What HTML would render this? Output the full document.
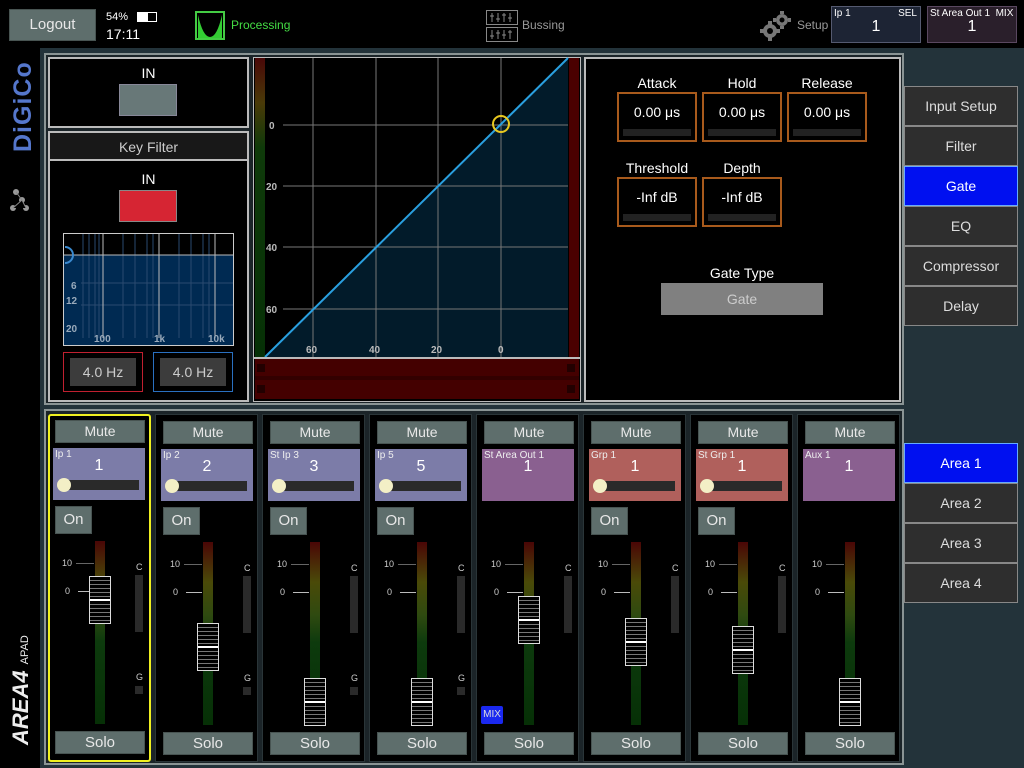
<!DOCTYPE html>
<html><head><meta charset="utf-8"><style>
*{box-sizing:border-box;margin:0;padding:0}
body{width:1024px;height:768px;overflow:hidden;background:#23333a;font-family:"Liberation Sans",sans-serif;color:#ddd;position:relative}
.a{position:absolute}
.btn{position:absolute;background:#5e6e6c;color:#e8e8e8;text-align:center;font-size:14px;border:1px solid #485452}
.strip{position:absolute;top:414px;width:103px;height:348px;background:#000;border:1px solid #2a3538}
.card{position:absolute;top:34px;left:5px;width:92px;height:52px}
.card .n{position:absolute;left:2px;top:1px;font-size:10px;color:#eee}
.card .v{position:absolute;left:0;right:0;top:9px;text-align:center;font-size:16px;color:#fff}
.trk{position:absolute;left:8px;top:32px;width:78px;height:10px;background:#2a2a2a}
.knob{position:absolute;left:4px;top:30px;width:14px;height:14px;border-radius:50%;background:#f3efc6}
.meter{position:absolute;left:47px;top:127px;width:10px;height:183px;background:linear-gradient(#4a0606,#4a4a08 22%,#2f4a10 40%,#0d3a0d 55%,#063006)}
.lbl{position:absolute;font-size:9px;color:#ccc}
.cap{position:absolute;left:41px;width:22px;height:48px;border:1px solid #ddd;background:repeating-linear-gradient(#000 0 3px,#777 3px 4px)}
.cap:after{content:"";position:absolute;left:0;right:0;top:22px;height:2px;background:#fff}
.tab{position:absolute;left:904px;width:114px;height:40px;background:#2e2e2e;border:1px solid #888;color:#ddd;font-size:14px;text-align:center;line-height:38px}
.box{position:absolute;width:80px;height:50px;border:2px solid #a85a1c;background:#000;text-align:center;font-size:14px;color:#fff;padding-top:10px}
.box:after{content:"";position:absolute;left:4px;right:4px;bottom:4px;height:7px;background:#222}
.t{position:absolute;font-size:14px;color:#fff;text-align:center}
</style></head><body>
<!-- top bar -->
<div class="a" style="left:0;top:0;width:1024px;height:48px;background:#000"></div>
<div class="btn" style="left:9px;top:9px;width:87px;height:32px;line-height:30px;font-size:15px">Logout</div>
<div class="a" style="left:106px;top:11px;font-size:11px;color:#fff">54%</div>
<div class="a" style="left:137px;top:12px;width:20px;height:10px;border:1px solid #fff"><div style="width:10px;height:8px;background:#fff"></div></div>
<div class="a" style="left:106px;top:26px;font-size:14px;color:#fff">17:11</div>
<div class="a" style="left:195px;top:11px;width:30px;height:29px;border:2px solid #4c4"><svg width="26" height="25"><path d="M1 2 Q6 24 13 24 Q20 24 25 2 L25 25 L1 25Z" fill="#3c3"/></svg></div>
<div class="a" style="left:231px;top:18px;font-size:12px;color:#4d4">Processing</div>
<svg class="a" style="left:486px;top:10px" width="32" height="32"><rect x="0.5" y="0.5" width="31" height="14" fill="none" stroke="#888"/><rect x="0.5" y="17.5" width="31" height="14" fill="none" stroke="#888"/><path d="M6 3v9M12 3v9M18 3v9M24 3v9M6 20v9M12 20v9M18 20v9M24 20v9M4 6h4M10 9h4M16 5h4M22 8h4M4 26h4M10 23h4M16 25h4M22 22h4" stroke="#888"/></svg>
<div class="a" style="left:522px;top:18px;font-size:12px;color:#999">Bussing</div>
<svg class="a" style="left:758px;top:10px" width="34" height="32"><g fill="#777"><circle cx="12" cy="21" r="7"/><circle cx="24" cy="10" r="6"/><path d="M10 11h4v4h-4zM10 27h4v4h-4zM2 19h4v4H2zM18 19h4v4h-4zM22 1h4v3h-4zM22 16h4v3h-4zM15 8h3v4h-3zM30 8h3v4h-3z"/></g><circle cx="12" cy="21" r="3" fill="#000"/><circle cx="24" cy="10" r="2.5" fill="#000"/></svg>
<div class="a" style="left:797px;top:18px;font-size:12px;color:#999">Setup</div>
<div class="a" style="left:831px;top:6px;width:90px;height:37px;background:#1d2434;border:1px solid #555a70"><span class="a" style="left:2px;top:1px;font-size:10px;color:#fff">Ip 1</span><span class="a" style="right:3px;top:1px;font-size:10px;color:#fff">SEL</span><span class="a" style="left:0;right:0;top:11px;text-align:center;font-size:16px;color:#fff">1</span></div>
<div class="a" style="left:927px;top:6px;width:90px;height:37px;background:#2a1f2b;border:1px solid #5a4860"><span class="a" style="left:2px;top:1px;font-size:10px;color:#fff;white-space:nowrap">St Area Out 1&nbsp; MIX</span><span class="a" style="left:0;right:0;top:11px;text-align:center;font-size:16px;color:#fff">1</span></div>
<!-- left logo -->
<div class="a" style="left:0;top:48px;width:40px;height:720px;background:#000"></div>
<div class="a" style="left:9px;top:152px;transform-origin:0 0;transform:rotate(-90deg);font-size:25px;line-height:28px;font-weight:bold;color:#5577cc;white-space:nowrap;letter-spacing:1px">DiGiCo</div>
<svg class="a" style="left:8px;top:160px" width="24" height="54"><g fill="#999"><circle cx="5" cy="48" r="3"/><circle cx="14" cy="40" r="3"/><circle cx="18" cy="48" r="3"/><circle cx="8" cy="32" r="3"/></g><path d="M5 48L14 40L18 48M14 40L8 32" stroke="#888"/></svg>
<div class="a" style="left:8px;top:745px;transform-origin:0 0;transform:rotate(-90deg);font-size:22px;line-height:26px;font-weight:bold;font-style:italic;color:#eee;white-space:nowrap">AREA4 <span style="font-size:11px;font-style:normal;font-weight:normal">APAD</span></div>
<!-- upper frame -->
<div class="a" style="left:44px;top:53px;width:860px;height:352px;border:2px solid #8a9494;background:#1b2428"></div>
<div class="a" style="left:48px;top:57px;width:201px;height:71px;border:2px solid #bbb;background:#000"></div>
<div class="t" style="left:48px;top:65px;width:201px">IN</div>
<div class="a" style="left:119px;top:84px;width:58px;height:32px;background:#687878;border:1px solid #889"></div>
<div class="a" style="left:48px;top:131px;width:201px;height:271px;border:2px solid #bbb;background:#000"></div>
<div class="a" style="left:50px;top:133px;width:197px;height:28px;background:#181818;border-bottom:2px solid #bbb;text-align:center;line-height:28px;font-size:14px;color:#ccc">Key Filter</div>
<div class="t" style="left:48px;top:171px;width:201px">IN</div>
<div class="a" style="left:119px;top:190px;width:58px;height:32px;background:#d62533;border:1px solid #888"></div>
<svg class="a" style="left:63px;top:233px" width="171" height="113">
<rect x="0.5" y="0.5" width="170" height="112" fill="#000" stroke="#ccc"/>
<rect x="1" y="22" width="169" height="90" fill="#002a52"/>
<g stroke="#2a4a70" stroke-width="1"><path d="M20 1V105M26 1V105M32 1V105M36 1V105M60 1V105M72 1V105M84 1V105M90 1V105M116 1V105M128 1V105M140 1V105M146 1V105M18 50H170M18 72H170"/></g>
<g stroke="#bbb"><path d="M40 1V105M96 1V105M152 1V105M1 22H170"/></g>
<path d="M2 14A8 8 0 0 1 2 30" stroke="#3a8ad0" stroke-width="2" fill="none"/>
<g fill="#9ab" font-size="10" font-weight="bold" font-family="Liberation Sans"><text x="8" y="56">6</text><text x="3" y="71">12</text><text x="3" y="99">20</text><text x="31" y="109">100</text><text x="91" y="109">1k</text><text x="145" y="109">10k</text></g>
</svg>
<div class="a" style="left:63px;top:352px;width:80px;height:40px;border:1px solid #c02030"><div class="a" style="left:6px;top:5px;width:66px;height:28px;background:#3c3c3c;text-align:center;line-height:28px;font-size:14px;color:#ccc">4.0 Hz</div></div>
<div class="a" style="left:153px;top:352px;width:80px;height:40px;border:1px solid #2a70c0"><div class="a" style="left:6px;top:5px;width:66px;height:28px;background:#3c3c3c;text-align:center;line-height:28px;font-size:14px;color:#ccc">4.0 Hz</div></div>
<!-- graph -->
<svg class="a" style="left:253px;top:57px" width="328" height="345">
<rect x="0" y="0" width="328" height="345" fill="#000" stroke="#bbb" stroke-width="2"/>
<defs><linearGradient id="lm" x1="0" y1="0" x2="0" y2="1"><stop offset="0" stop-color="#4a0808"/><stop offset=".15" stop-color="#4a3a08"/><stop offset=".3" stop-color="#0f3a0a"/><stop offset="1" stop-color="#063006"/></linearGradient></defs>
<rect x="2" y="1" width="10" height="299" fill="url(#lm)"/>
<rect x="316" y="1" width="10" height="299" fill="#4a0000"/>
<path d="M12 300L315 1V300Z" fill="#021b2a"/>
<g stroke="#777"><path d="M60 1V300M123 1V300M185 1V300M248 1V300M30 68H315M30 129H315M30 190H315M30 252H315"/></g>
<path d="M12 300L315 1" stroke="#2aa0e0" stroke-width="2"/>
<circle cx="248" cy="67" r="8" fill="none" stroke="#e8c820" stroke-width="2"/>
<g fill="#bbb" font-size="10" font-weight="bold" font-family="Liberation Sans"><text x="16" y="72">0</text><text x="13" y="133">20</text><text x="13" y="194">40</text><text x="13" y="256">60</text><text x="53" y="296">60</text><text x="116" y="296">40</text><text x="178" y="296">20</text><text x="245" y="296">0</text></g>
<rect x="1" y="300" width="326" height="2" fill="#bbb"/>
<rect x="2" y="302" width="324" height="40" fill="#440000"/>
<path d="M2 320H326M2 322H326" stroke="#200"/>
<g fill="#200"><rect x="4" y="307" width="8" height="8"/><rect x="4" y="328" width="8" height="8"/><rect x="314" y="307" width="8" height="8"/><rect x="314" y="328" width="8" height="8"/></g>
</svg>
<!-- right panel -->
<div class="a" style="left:584px;top:57px;width:317px;height:345px;border:2px solid #bbb;background:#000"></div>
<div class="t" style="left:617px;top:75px;width:80px">Attack</div>
<div class="t" style="left:702px;top:75px;width:80px">Hold</div>
<div class="t" style="left:787px;top:75px;width:80px">Release</div>
<div class="box" style="left:617px;top:92px">0.00 μs</div>
<div class="box" style="left:702px;top:92px">0.00 μs</div>
<div class="box" style="left:787px;top:92px">0.00 μs</div>
<div class="t" style="left:612px;top:160px;width:90px">Threshold</div>
<div class="t" style="left:702px;top:160px;width:80px">Depth</div>
<div class="box" style="left:617px;top:177px">-Inf dB</div>
<div class="box" style="left:702px;top:177px">-Inf dB</div>
<div class="t" style="left:661px;top:265px;width:162px">Gate Type</div>
<div class="a" style="left:661px;top:283px;width:162px;height:32px;background:#808080;text-align:center;line-height:32px;font-size:14px;color:#ccc">Gate</div>
<div class="tab" style="top:86px">Input Setup</div>
<div class="tab" style="top:126px">Filter</div>
<div class="tab" style="top:166px;background:#0010f0;color:#fff;border-color:#6af">Gate</div>
<div class="tab" style="top:206px">EQ</div>
<div class="tab" style="top:246px">Compressor</div>
<div class="tab" style="top:286px">Delay</div>
<!-- bottom frame -->
<div class="a" style="left:44px;top:409px;width:860px;height:356px;border:2px solid #8a9494;background:#1b2428"></div>
<div class="tab" style="top:443px;background:#0010f0;color:#fff;border-color:#6af">Area 1</div>
<div class="tab" style="top:483px">Area 2</div>
<div class="tab" style="top:523px">Area 3</div>
<div class="tab" style="top:563px">Area 4</div>

<!-- strip 1 -->
<div class="strip" style="left:48px;border:2px solid #f0f020;border-radius:3px">
<div class="btn" style="left:5px;top:4px;width:90px;height:23px;line-height:21px">Mute</div>
<div class="card" style="left:3px;top:32px;background:#7c7ca8"><span class="n">Ip 1</span><span class="v">1</span><div class="trk"></div><div class="knob"></div></div>
<div class="btn" style="left:5px;top:90px;width:37px;height:28px;line-height:26px;font-size:15px">On</div>
<div class="meter" style="left:45px;top:125px"></div>
<div class="lbl" style="left:12px;top:142px">10</div><div class="a" style="left:26px;top:147px;width:18px;height:1px;background:#666"></div>
<div class="lbl" style="left:15px;top:170px">0</div><div class="a" style="left:28px;top:175px;width:16px;height:1px;background:#bbb"></div>
<div class="lbl" style="left:86px;top:146px">C</div><div class="a" style="left:85px;top:159px;width:8px;height:57px;background:#2a2a2a"></div>
<div class="lbl" style="left:86px;top:256px">G</div><div class="a" style="left:85px;top:270px;width:8px;height:8px;background:#2a2a2a"></div>
<div class="cap" style="left:39px;top:160px"></div>
<div class="btn" style="left:5px;top:315px;width:90px;height:23px;line-height:21px;font-size:15px">Solo</div>
</div>
<!-- strip 2 -->
<div class="strip" style="left:155px">
<div class="btn" style="left:7px;top:6px;width:90px;height:23px;line-height:21px">Mute</div>
<div class="card" style="background:#7c7ca8"><span class="n">Ip 2</span><span class="v">2</span><div class="trk"></div><div class="knob"></div></div>
<div class="btn" style="left:7px;top:92px;width:37px;height:28px;line-height:26px;font-size:15px">On</div>
<div class="meter"></div>
<div class="lbl" style="left:14px;top:144px">10</div><div class="a" style="left:28px;top:149px;width:18px;height:1px;background:#666"></div>
<div class="lbl" style="left:17px;top:172px">0</div><div class="a" style="left:30px;top:177px;width:16px;height:1px;background:#bbb"></div>
<div class="lbl" style="left:88px;top:148px">C</div><div class="a" style="left:87px;top:161px;width:8px;height:57px;background:#2a2a2a"></div>
<div class="lbl" style="left:88px;top:258px">G</div><div class="a" style="left:87px;top:272px;width:8px;height:8px;background:#2a2a2a"></div>
<div class="cap" style="top:208px"></div>
<div class="btn" style="left:7px;top:317px;width:90px;height:23px;line-height:21px;font-size:15px">Solo</div>
</div>
<!-- strip 3 -->
<div class="strip" style="left:262px">
<div class="btn" style="left:7px;top:6px;width:90px;height:23px;line-height:21px">Mute</div>
<div class="card" style="background:#7c7ca8"><span class="n">St Ip 3</span><span class="v">3</span><div class="trk"></div><div class="knob"></div></div>
<div class="btn" style="left:7px;top:92px;width:37px;height:28px;line-height:26px;font-size:15px">On</div>
<div class="meter"></div>
<div class="lbl" style="left:14px;top:144px">10</div><div class="a" style="left:28px;top:149px;width:18px;height:1px;background:#666"></div>
<div class="lbl" style="left:17px;top:172px">0</div><div class="a" style="left:30px;top:177px;width:16px;height:1px;background:#bbb"></div>
<div class="lbl" style="left:88px;top:148px">C</div><div class="a" style="left:87px;top:161px;width:8px;height:57px;background:#2a2a2a"></div>
<div class="lbl" style="left:88px;top:258px">G</div><div class="a" style="left:87px;top:272px;width:8px;height:8px;background:#2a2a2a"></div>
<div class="cap" style="top:263px"></div>
<div class="btn" style="left:7px;top:317px;width:90px;height:23px;line-height:21px;font-size:15px">Solo</div>
</div>
<!-- strip 4 -->
<div class="strip" style="left:369px">
<div class="btn" style="left:7px;top:6px;width:90px;height:23px;line-height:21px">Mute</div>
<div class="card" style="background:#7c7ca8"><span class="n">Ip 5</span><span class="v">5</span><div class="trk"></div><div class="knob"></div></div>
<div class="btn" style="left:7px;top:92px;width:37px;height:28px;line-height:26px;font-size:15px">On</div>
<div class="meter"></div>
<div class="lbl" style="left:14px;top:144px">10</div><div class="a" style="left:28px;top:149px;width:18px;height:1px;background:#666"></div>
<div class="lbl" style="left:17px;top:172px">0</div><div class="a" style="left:30px;top:177px;width:16px;height:1px;background:#bbb"></div>
<div class="lbl" style="left:88px;top:148px">C</div><div class="a" style="left:87px;top:161px;width:8px;height:57px;background:#2a2a2a"></div>
<div class="lbl" style="left:88px;top:258px">G</div><div class="a" style="left:87px;top:272px;width:8px;height:8px;background:#2a2a2a"></div>
<div class="cap" style="top:263px"></div>
<div class="btn" style="left:7px;top:317px;width:90px;height:23px;line-height:21px;font-size:15px">Solo</div>
</div>
<!-- strip 5 -->
<div class="strip" style="left:476px">
<div class="btn" style="left:7px;top:6px;width:90px;height:23px;line-height:21px">Mute</div>
<div class="card" style="background:#8a6090"><span class="n">St Area Out 1</span><span class="v">1</span></div>
<div class="meter"></div>
<div class="lbl" style="left:14px;top:144px">10</div><div class="a" style="left:28px;top:149px;width:18px;height:1px;background:#666"></div>
<div class="lbl" style="left:17px;top:172px">0</div><div class="a" style="left:30px;top:177px;width:16px;height:1px;background:#bbb"></div>
<div class="lbl" style="left:88px;top:148px">C</div><div class="a" style="left:87px;top:161px;width:8px;height:57px;background:#2a2a2a"></div>
<div class="a" style="left:4px;top:291px;width:22px;height:18px;background:#1a28f0;border-radius:2px;font-size:10px;color:#ddd;text-align:center;line-height:18px">MIX</div>
<div class="cap" style="top:181px"></div>
<div class="btn" style="left:7px;top:317px;width:90px;height:23px;line-height:21px;font-size:15px">Solo</div>
</div>
<!-- strip 6 -->
<div class="strip" style="left:583px">
<div class="btn" style="left:7px;top:6px;width:90px;height:23px;line-height:21px">Mute</div>
<div class="card" style="background:#b0605c"><span class="n">Grp 1</span><span class="v">1</span><div class="trk"></div><div class="knob"></div></div>
<div class="btn" style="left:7px;top:92px;width:37px;height:28px;line-height:26px;font-size:15px">On</div>
<div class="meter"></div>
<div class="lbl" style="left:14px;top:144px">10</div><div class="a" style="left:28px;top:149px;width:18px;height:1px;background:#666"></div>
<div class="lbl" style="left:17px;top:172px">0</div><div class="a" style="left:30px;top:177px;width:16px;height:1px;background:#bbb"></div>
<div class="lbl" style="left:88px;top:148px">C</div><div class="a" style="left:87px;top:161px;width:8px;height:57px;background:#2a2a2a"></div>
<div class="cap" style="top:203px"></div>
<div class="btn" style="left:7px;top:317px;width:90px;height:23px;line-height:21px;font-size:15px">Solo</div>
</div>
<!-- strip 7 -->
<div class="strip" style="left:690px">
<div class="btn" style="left:7px;top:6px;width:90px;height:23px;line-height:21px">Mute</div>
<div class="card" style="background:#b0605c"><span class="n">St Grp 1</span><span class="v">1</span><div class="trk"></div><div class="knob"></div></div>
<div class="btn" style="left:7px;top:92px;width:37px;height:28px;line-height:26px;font-size:15px">On</div>
<div class="meter"></div>
<div class="lbl" style="left:14px;top:144px">10</div><div class="a" style="left:28px;top:149px;width:18px;height:1px;background:#666"></div>
<div class="lbl" style="left:17px;top:172px">0</div><div class="a" style="left:30px;top:177px;width:16px;height:1px;background:#bbb"></div>
<div class="lbl" style="left:88px;top:148px">C</div><div class="a" style="left:87px;top:161px;width:8px;height:57px;background:#2a2a2a"></div>
<div class="cap" style="top:211px"></div>
<div class="btn" style="left:7px;top:317px;width:90px;height:23px;line-height:21px;font-size:15px">Solo</div>
</div>
<!-- strip 8 -->
<div class="strip" style="left:797px">
<div class="btn" style="left:7px;top:6px;width:90px;height:23px;line-height:21px">Mute</div>
<div class="card" style="background:#8a6090"><span class="n">Aux 1</span><span class="v">1</span></div>
<div class="meter"></div>
<div class="lbl" style="left:14px;top:144px">10</div><div class="a" style="left:28px;top:149px;width:18px;height:1px;background:#666"></div>
<div class="lbl" style="left:17px;top:172px">0</div><div class="a" style="left:30px;top:177px;width:16px;height:1px;background:#bbb"></div>
<div class="cap" style="top:263px"></div>
<div class="btn" style="left:7px;top:317px;width:90px;height:23px;line-height:21px;font-size:15px">Solo</div>
</div>
</body></html>
